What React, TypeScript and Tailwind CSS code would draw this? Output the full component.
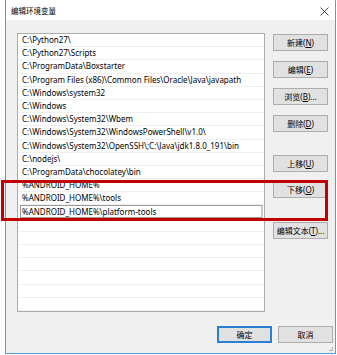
import React from 'react';

const paths = [
  'C:\\Python27\\',
  'C:\\Python27\\Scripts',
  'C:\\ProgramData\\Boxstarter',
  'C:\\Program Files (x86)\\Common Files\\Oracle\\Java\\javapath',
  'C:\\Windows\\system32',
  'C:\\Windows',
  'C:\\Windows\\System32\\Wbem',
  'C:\\Windows\\System32\\WindowsPowerShell\\v1.0\\',
  'C:\\Windows\\System32\\OpenSSH\\;C:\\Java\\jdk1.8.0_191\\bin',
  'C:\\nodejs\\',
  'C:\\ProgramData\\chocolatey\\bin',
  '%ANDROID_HOME%',
  '%ANDROID_HOME%\\tools',
];

const font = { fontFamily: '"Segoe UI", "Noto Sans", "Noto Sans CJK SC", sans-serif' };

function Btn({ label, k, tail = '', primary = false }: { label: string; k?: string; tail?: string; primary?: boolean }) {
  return (
    <div
      className={`flex h-[17px] w-[55px] items-center justify-center bg-[#e1e1e1] text-[8px] leading-none text-black whitespace-nowrap ${
        primary ? 'border-2 border-[#2a7fd4]' : 'border border-[#adadad]'
      }`}
    >
      {label}
      {k && (
        <>
          (<span className="underline">{k}</span>){tail}
        </>
      )}
    </div>
  );
}

function Row({ text }: { text: string }) {
  return (
    <div className="flex h-[13.2px] items-center border-b border-[#f0f0f0] pl-[4px] text-[8px] leading-none text-black whitespace-nowrap">
      {text}
    </div>
  );
}

export default function App() {
  const empty = Array.from({ length: 7 });
  return (
    <div className="relative h-[355px] w-[337px] overflow-hidden bg-white" style={font}>
      <div className="ml-[5px] flex h-[354px] w-[331px] flex-col border-x border-b border-[#5b9bd5]">
        <div className="flex h-[20px] items-center justify-between bg-white pl-[5px] pr-[6px]">
          <span className="pt-[3px] text-[7.5px] text-black">编辑环境变量</span>
          <svg width="9" height="9" viewBox="0 0 9 9" className="mt-[3px]">
            <path d="M0.5 0.5 L8.5 8.5 M8.5 0.5 L0.5 8.5" stroke="#333" strokeWidth="0.9" />
          </svg>
        </div>
        <div className="relative flex flex-1 flex-col bg-[#f0f0f0] pl-[11px] pt-[13px]">
          <div className="flex gap-[8px]">
            <div className="h-[279px] w-[248px] overflow-hidden border border-[#acacac] bg-white">
              {paths.map((p) => (
                <Row key={p} text={p} />
              ))}
              <div className="flex h-[13.2px] items-center border-b border-[#f0f0f0] pl-[2px]">
                <div className="flex h-[13px] w-[243px] items-center border border-[#9a9a9a] border-r-2 border-r-[#c8c8c8] pl-[1px] text-[8px] leading-none text-black whitespace-nowrap">
                  %ANDROID_HOME%\platform-tools
                </div>
              </div>
              {empty.map((_, i) => (
                <Row key={i} text="" />
              ))}
            </div>
            <div className="flex flex-col pt-[1px]">
              <div className="flex flex-col gap-[10px]">
                <Btn label="新建" k="N" />
                <Btn label="编辑" k="E" />
                <Btn label="浏览" k="B" tail="..." />
                <Btn label="删除" k="D" />
              </div>
              <div className="mt-[23px] flex flex-col gap-[9px]">
                <Btn label="上移" k="U" />
                <Btn label="下移" k="O" />
              </div>
              <div className="mt-[24px]">
                <Btn label="编辑文本" k="T" tail="..." />
              </div>
            </div>
          </div>
          <div className="mt-[14px] flex justify-end gap-[6px] pr-[2px]">
            <Btn label="确定" primary />
            <Btn label="取消" />
          </div>
          <svg width="5" height="5" viewBox="0 0 5 5" className="absolute bottom-[1px] right-[1px]">
            <rect x="3" y="0" width="1" height="1" fill="#a0a0a0" />
            <rect x="1.5" y="1.5" width="1" height="1" fill="#a0a0a0" />
            <rect x="3" y="1.5" width="1" height="1" fill="#a0a0a0" />
            <rect x="0" y="3" width="1" height="1" fill="#a0a0a0" />
            <rect x="1.5" y="3" width="1" height="1" fill="#a0a0a0" />
            <rect x="3" y="3" width="1" height="1" fill="#a0a0a0" />
          </svg>
        </div>
      </div>
      <div className="absolute left-[1px] top-[180px] h-[41px] w-[327px] border-[3px] border-[#c00000]" />
    </div>
  );
}
